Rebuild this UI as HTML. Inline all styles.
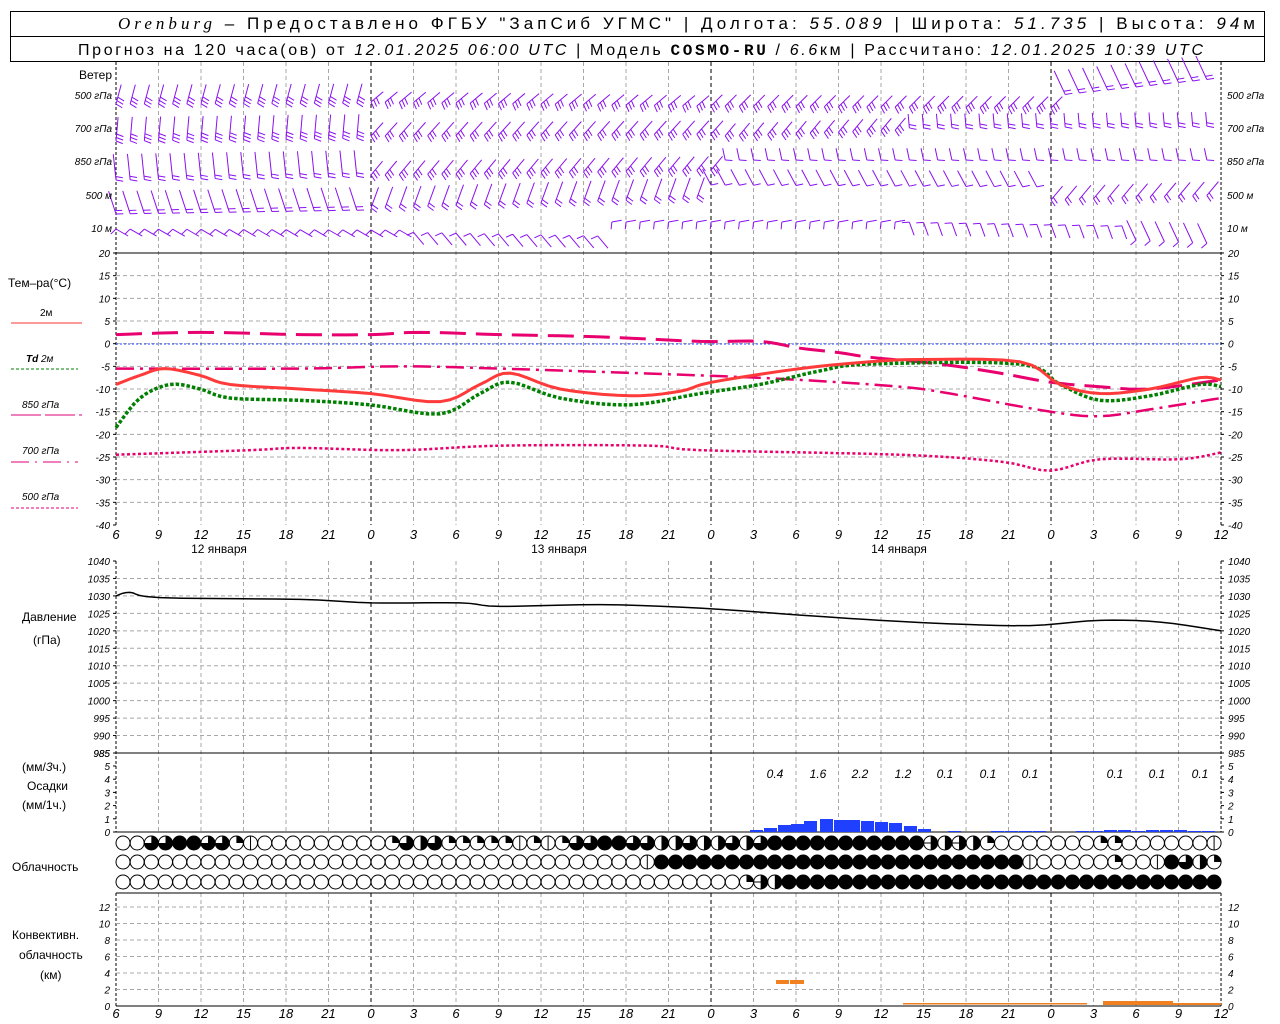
<!DOCTYPE html>
<html><head><meta charset="utf-8"><style>
html,body{margin:0;padding:0;background:#fff;}
svg{display:block;font-family:"Liberation Sans",sans-serif;}
.t{font-size:12px;fill:#000}
.n{font-size:10px;font-style:italic;fill:#000}
</style></head><body>
<svg id="s" width="1280" height="1024" viewBox="0 0 1280 1024" xmlns="http://www.w3.org/2000/svg">
<rect x="0" y="0" width="1280" height="1024" fill="#fff"/>
<rect x="10.5" y="11.5" width="1254" height="50" fill="none" stroke="#000"/>
<line x1="10" y1="36.5" x2="1265" y2="36.5" stroke="#000"/>
<text x="118" y="29" textLength="1137" lengthAdjust="spacing" style="font-size:17px" fill="#000"><tspan font-family="Liberation Serif" font-style="italic">Orenburg</tspan> – Предоставлено ФГБУ "ЗапСиб УГМС" | Долгота: <tspan font-style="italic">55.089</tspan> | Широта: <tspan font-style="italic">51.735</tspan> | Высота: <tspan font-style="italic">94</tspan>м</text>
<text x="78" y="55" textLength="1125" lengthAdjust="spacing" style="font-size:16px" fill="#000">Прогноз на 120 часа(ов) от <tspan font-style="italic">12.01.2025 06:00 UTC</tspan>  | Модель <tspan font-family="Liberation Mono" font-weight="bold">COSMO-RU</tspan> / <tspan font-style="italic">6.6</tspan>км | Рассчитано: <tspan font-style="italic">12.01.2025 10:39 UTC</tspan></text>
<g id="g"></g>
<text class="t" x="112" y="79" text-anchor="end">Ветер</text>
<g class="n" style="font-size:10px">
<text x="112" y="99" text-anchor="end">500 гПа</text><text x="112" y="132" text-anchor="end">700 гПа</text><text x="112" y="165" text-anchor="end">850 гПа</text><text x="112" y="199" text-anchor="end">500 м</text><text x="112" y="232" text-anchor="end">10   м</text>
<text x="1227" y="99">500 гПа</text><text x="1227" y="132">700 гПа</text><text x="1227" y="165">850 гПа</text><text x="1227" y="199">500 м</text><text x="1227" y="232">10   м</text>
</g>
<text class="t" x="8" y="287">Тем–ра(°С)</text>
<text class="n" x="40" y="316" style="font-style:normal">2м</text>
<line x1="11" y1="323" x2="82" y2="323" stroke="#ff3030"/>
<text class="n" x="26" y="362"><tspan font-weight="bold">Td</tspan>  2м</text>
<line x1="11" y1="369" x2="78" y2="369" stroke="#008000" stroke-dasharray="3,2"/>
<text class="n" x="22" y="408">850 гПа</text>
<line x1="11" y1="415" x2="82" y2="415" stroke="#e0007a" stroke-dasharray="30,4"/>
<text class="n" x="22" y="454">700 гПа</text>
<line x1="11" y1="462" x2="78" y2="462" stroke="#e0007a" stroke-dasharray="18,6,2,6"/>
<text class="n" x="22" y="500">500 гПа</text>
<line x1="11" y1="508" x2="78" y2="508" stroke="#e0007a" stroke-dasharray="3,2"/>
<text class="t" x="22" y="621">Давление</text>
<text class="t" x="33" y="644">(гПа)</text>
<text class="t" x="22" y="771">(мм/<tspan font-style="italic">3</tspan>ч.)</text>
<text class="t" x="27" y="790">Осадки</text>
<text class="t" x="22" y="809">(мм/1ч.)</text>
<text class="t" x="12" y="871">Облачность</text>
<text class="t" x="12" y="939">Конвективн.</text>
<text class="t" x="19" y="959">облачность</text>
<text class="t" x="40" y="979">(км)</text>
<g class="t" style="font-size:12px">
<text x="219" y="553" text-anchor="middle">12  января</text>
<text x="559" y="553" text-anchor="middle">13  января</text>
<text x="899" y="553" text-anchor="middle">14  января</text>
</g>
<g class="n" style="font-size:12px">
<text x="775" y="778" text-anchor="middle">0.4</text><text x="818" y="778" text-anchor="middle">1.6</text><text x="860" y="778" text-anchor="middle">2.2</text><text x="903" y="778" text-anchor="middle">1.2</text><text x="945" y="778" text-anchor="middle">0.1</text><text x="988" y="778" text-anchor="middle">0.1</text><text x="1030" y="778" text-anchor="middle">0.1</text><text x="1115" y="778" text-anchor="middle">0.1</text><text x="1157" y="778" text-anchor="middle">0.1</text><text x="1200" y="778" text-anchor="middle">0.1</text>
</g>
<g id="lbl" class="n"></g>
</svg>
<script>
var NS="http://www.w3.org/2000/svg",g=document.getElementById('g'),L=document.getElementById('lbl');
function X(h){return 116+h*14.167;}
function el(t,a,p){var e=document.createElementNS(NS,t);for(var k in a)e.setAttribute(k,a[k]);(p||g).appendChild(e);return e;}
function ln(x1,y1,x2,y2,c,w,d){var a={x1:x1,y1:y1,x2:x2,y2:y2,stroke:c,'stroke-width':w||1};if(d)a['stroke-dasharray']=d;return el('line',a);}
function tx(x,y,s,anc,sz){var e=el('text',{x:x,y:y,'text-anchor':anc||'start'},L);if(sz)e.setAttribute('style','font-size:'+sz+'px');e.textContent=s;}
var GR='#a8a8a8';
function hgrid(y0,y1,step,v0,v1){for(var v=v0;v>=v1;v-=step){var y=y0+(v0-v)*(y1-y0)/(v0-v1);if(v!=v0&&v!=v1)ln(116,y,1221,y,GR,1,'4,3');tx(110,y+4,String(v),'end');tx(1228,y+4,String(v),'start');ln(113,y,116,y,'#000');ln(1221,y,1224,y,'#000');}}
[[62,525],[561,832],[893,1006]].forEach(function(r){for(var h=0;h<=78;h+=3){var x=X(h);var mid=(h==18||h==42||h==66);if(h==0||h==78)ln(x,r[0],x,r[1],'#000',1,'3,2');else ln(x,r[0],x,r[1],mid?'#000':GR,1,'4,3');}});
hgrid(253,525,5,20,-40);
hgrid(561,753,5,1040,985);
for(var v=0;v<=5;v++){var y=832-v*13.2;tx(1228,y+4,String(v));tx(110,y+4,String(v),'end');ln(113,y,116,y,'#000');ln(1221,y,1224,y,'#000');}
tx(110,757,'985','end');
for(var v=0;v<=12;v+=2){var y=1006-v*8.25;if(v)ln(116,y,1221,y,GR,1,'4,3');tx(110,y+4,String(v),'end');tx(1228,y+4,String(v));}
ln(116,253,1221,253,'#000');ln(116,753,1221,753,'#000');ln(116,832,1221,832,'#000');ln(116,893,1221,893,'#000');ln(116,1006,1221,1006,'#000');
ln(116,344,1221,344,'#2040ff',1,'2,2');
var hl=[6,9,12,15,18,21,0,3,6,9,12,15,18,21,0,3,6,9,12,15,18,21,0,3,6,9,12];
hl.forEach(function(v,i){var x=X(i*3);tx(x,539,String(v),'middle',13);tx(x,1018,String(v),'middle',13);});
function curve(pts,fy,c,w,d){var s='';pts.forEach(function(p,i){s+=(i?'L':'M')+p[0]+','+fy(p[1]);});var a={d:s,fill:'none',stroke:c,'stroke-width':w,'stroke-linejoin':'round'};if(d)a['stroke-dasharray']=d;el('path',a);}
function smooth(p){var o=[];for(var i=0;i<p.length-1;i++){for(var t=0;t<1;t+=0.2){var a=p[Math.max(i-1,0)],b=p[i],c=p[i+1],d=p[Math.min(i+2,p.length-1)];var t2=t*t,t3=t2*t;var f=function(k){return 0.5*((2*b[k])+(-a[k]+c[k])*t+(2*a[k]-5*b[k]+4*c[k]-d[k])*t2+(-a[k]+3*b[k]-3*c[k]+d[k])*t3);};o.push([f(0),f(1)]);}}o.push(p[p.length-1]);return o;}
function fT(t){return 253+(20-t)*4.533;}
var M='#e8006e';
curve(smooth([[116,-24.5],[250,-23.5],[300,-23],[400,-23.5],[500,-22.5],[650,-22.5],[700,-23.5],[900,-24.5],[1000,-26],[1050,-28],[1100,-25.5],[1180,-25.5],[1221,-24]]),fT,M,2.5,'3,2.5');
curve(smooth([[116,-5.5],[300,-5.5],[400,-5],[500,-5.5],[700,-7],[800,-8],[900,-9.5],[950,-11],[1050,-15],[1100,-16],[1150,-14.5],[1221,-12]]),fT,M,2.5,'18,6,3,6');
curve(smooth([[116,2],[200,2.5],[300,2],[372,2],[420,2.5],[500,2],[600,1.5],[700,0.5],[760,0.5],[800,-1],[840,-2],[870,-3],[940,-4.5],[1000,-6.5],[1050,-8.5],[1100,-9.5],[1150,-10],[1221,-8]]),fT,M,3,'26,10');
curve(smooth([[116,-18.5],[140,-12],[170,-9],[200,-10],[230,-12],[300,-12.5],[370,-13.5],[440,-15.5],[480,-11],[510,-8.5],[560,-12],[630,-13.5],[700,-11],[760,-9],[820,-6],[870,-4.5],[1020,-4.5],[1060,-9],[1100,-12.5],[1150,-11.5],[1200,-9],[1221,-9.5]]),fT,'#008000',3.5,'3.5,2');
curve(smooth([[116,-9],[140,-7],[165,-5.5],[200,-7],[230,-9],[300,-10],[370,-11],[440,-12.8],[480,-9],[510,-6.5],[560,-10],[630,-11.5],[680,-10.5],[712,-8.5],[800,-5.5],[870,-4],[920,-3.5],[1020,-4],[1060,-9],[1100,-11],[1150,-10],[1200,-7.5],[1221,-8]]),fT,'#ff3a3a',3);
curve(smooth([[116,1030],[130,1031],[160,1029.5],[300,1029],[372,1028],[460,1028],[500,1027],[600,1027.5],[700,1026.5],[800,1024.5],[880,1023],[950,1022],[1030,1021.5],[1100,1023],[1160,1022.5],[1221,1020]]),function(p){return 561+(1040-p)*3.49;},'#000',1.5);
var PB=[[756,2],[770,4],[784,7],[797,8],[810,11],[826,13],[840,12],[853,12],[867,11],[881,10],[895,9],[910,6],[924,3],[954,1],[997,1],[1011,1],[1025,1],[1039,1],[1082,1],[1096,1],[1110,2],[1124,2],[1138,1],[1152,2],[1166,2],[1180,2],[1194,1],[1208,1]];
PB.forEach(function(b){el('rect',{x:b[0]-6,y:832-b[1],width:13,height:b[1],fill:'#2040ff'});});
el('rect',{x:776,y:980,width:13,height:4,fill:'#f08020'});el('rect',{x:790,y:980,width:14,height:4,fill:'#f08020'});
el('rect',{x:903,y:1003,width:184,height:1.5,fill:'#f08020'});
el('rect',{x:1103,y:1001,width:70,height:4,fill:'#f08020'});
el('rect',{x:1173,y:1003,width:48,height:2,fill:'#f08020'});
var rows=["00"+"3344331"+"v"+"000000000"+"132311111v1v133443"+"32232232"+"3"+"44444444444"+"h2h21"+"0000000"+"11"+"000000"+"v",
"0".repeat(37)+"v"+"4".repeat(26)+"v"+"00000"+"1"+"00"+"v"+"4"+"3"+"2"+"1",
"0".repeat(44)+"1h2"+"4".repeat(31)];
var ys=[843,862,882];
rows.forEach(function(r,ri){for(var i=0;i<78;i++){var c=r[i]||'0',x=123+i*14.17,y=ys[ri],R=7;
 el('circle',{cx:x,cy:y,r:R,fill:c=='4'?'#000':'#fff',stroke:'#000','stroke-width':1});
 if(c=='1')el('path',{d:'M'+x+','+y+'V'+(y-R)+'A'+R+','+R+' 0 0 1 '+(x+R)+','+y+'Z',fill:'#000'});
 if(c=='2')el('path',{d:'M'+x+','+(y-R)+'A'+R+','+R+' 0 0 1 '+x+','+(y+R)+'Z',fill:'#000'});
 if(c=='3')el('path',{d:'M'+x+','+y+'V'+(y-R)+'A'+R+','+R+' 0 1 1 '+(x-R)+','+y+'Z',fill:'#000'});
 if(c=='v')ln(x,y-R,x,y+R,'#000');
 if(c=='h'){el('path',{d:'M'+x+','+(y-R)+'A'+R+','+R+' 0 0 1 '+x+','+(y+R)+'Z',fill:'#000'});ln(x-R,y,x+R,y,'#000');}
}});
var P='#8a10f0';
function barb(x,yb,a,Lg,nf,fl){var r=a*Math.PI/180,dx=Math.sin(r),dy=-Math.cos(r);var x2=x+Lg*dx,y2=yb+Lg*dy;ln(x,yb,x2,y2,P,1);
 var px=Math.cos(r),py=Math.sin(r);for(var k=0;k<nf;k++){var t=k*3.5;var bx=x+t*dx,by=yb+t*dy;ln(bx,by,bx+7*px*fl-2*dx,by+7*py*fl-2*dy,P,1);}}
function lev(spec){for(var h=0;h<=78;h++){var x=X(h);for(var j=0;j<spec.length;j++){var s=spec[j];if(x<=s[0]){var f=(x-s[1])/(s[0]-s[1]);var yb=s[2]+(s[3]-s[2])*f;barb(x,yb,s[4],s[5],s[6],s[7]||1);break;}}}}
lev([[370,116,104,103,15,20,3],[700,370,102,106,50,16,3],[1055,700,106,108,45,16,3],[1221,1060,95,78,-25,26,2]]);
lev([[370,116,141,138,5,24,3],[720,370,136,134,42,18,3],[900,720,136,130,40,16,3],[1221,900,128,126,-5,14,2]]);
lev([[370,116,180,176,-6,26,2],[720,370,175,170,40,18,3],[1221,720,160,160,-12,12,1]]);
lev([[370,116,214,210,-18,24,2],[700,370,208,198,20,22,2],[1050,700,185,187,-28,18,1],[1221,1050,200,195,40,18,2]]);
lev([[400,116,229,230,120,14,1],[600,400,232,236,140,16,1],[900,600,222,222,80,10,1],[1130,900,222,226,160,14,1],[1221,1130,240,244,-25,22,1,-1]]);
</script>
</body></html>
